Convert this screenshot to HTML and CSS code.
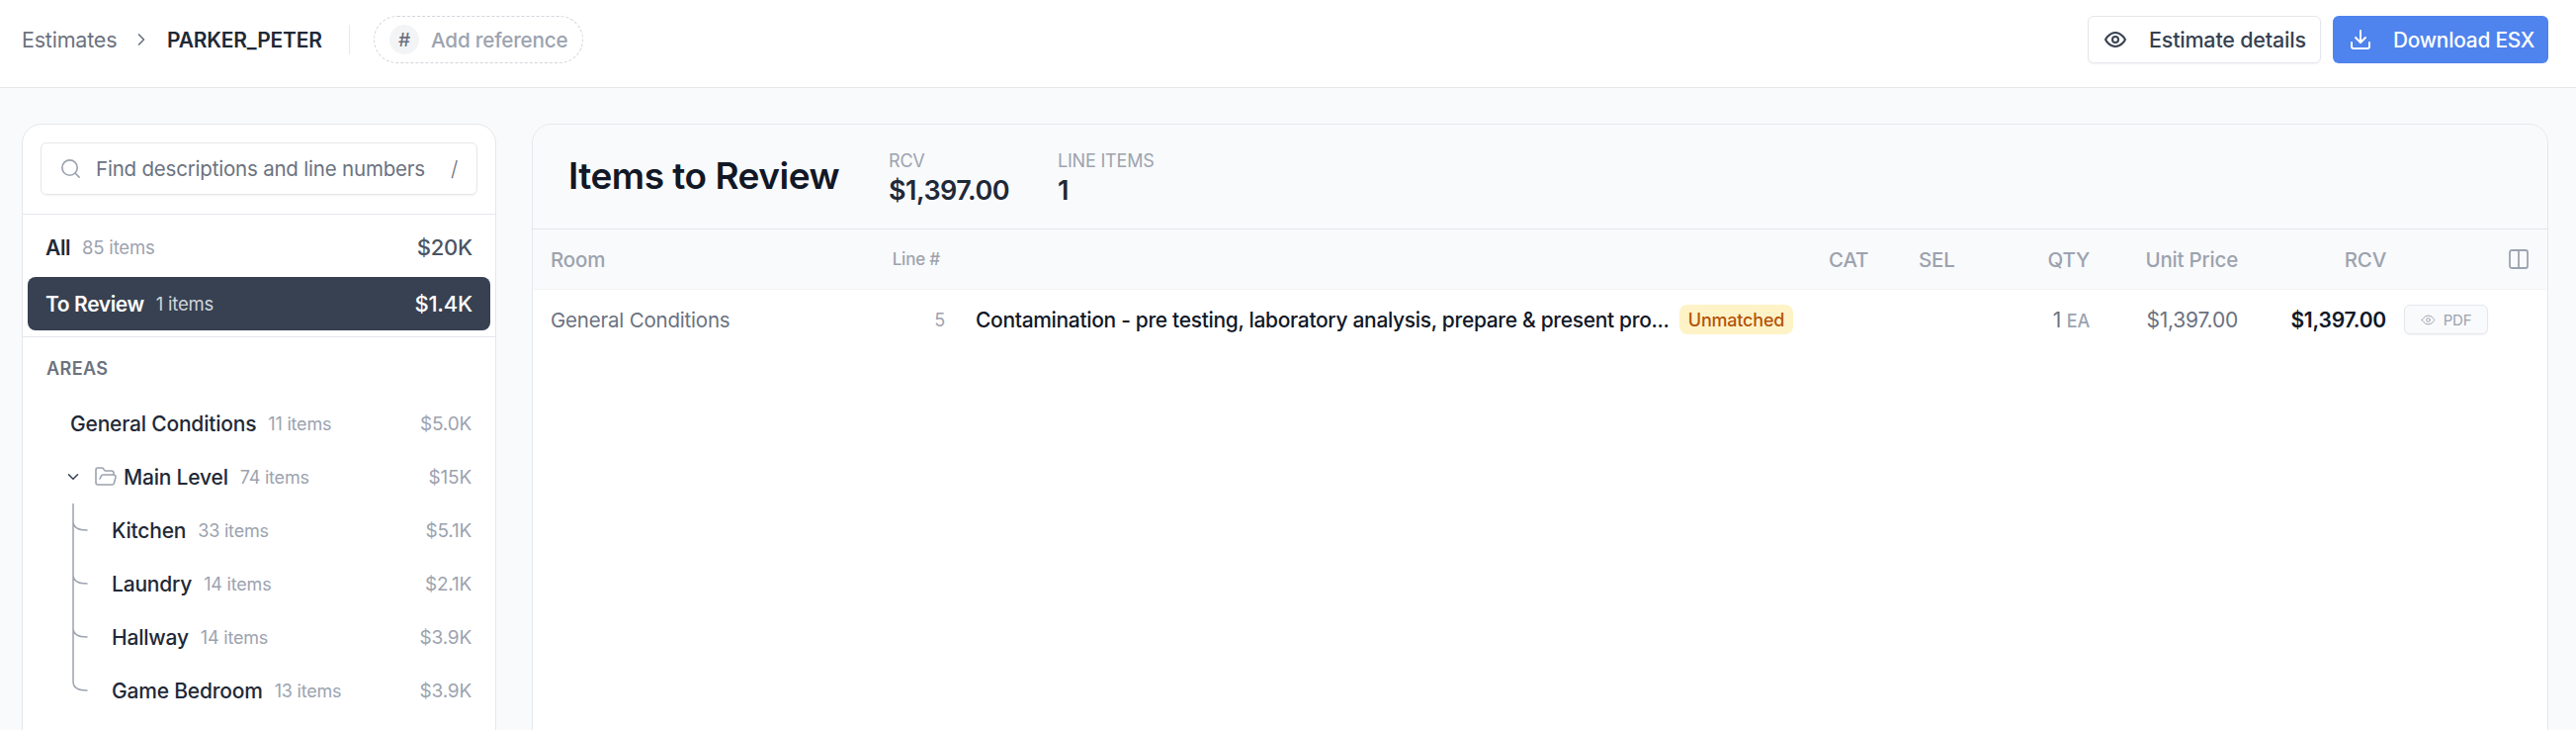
FILE: index.html
```html
<!DOCTYPE html>
<html lang="en">
<head>
<meta charset="utf-8">
<title>PARKER_PETER</title>
<link rel="stylesheet" href="styles.css">
</head>
<body>
<header class="topbar">
  <nav class="crumbs">
    <span class="crumb">Estimates</span>
    <svg class="crumb-chev" viewBox="0 0 24 24"><path d="m9 18 6-6-6-6"/></svg>
    <span class="crumb-current">PARKER_PETER</span>
    <span class="crumb-div"></span>
    <button class="ref-pill"><span class="ref-hash">#</span><span>Add reference</span></button>
  </nav>
  <div class="actions">
    <button class="btn btn-light">
      <svg class="btn-icon" viewBox="0 0 24 24"><path d="M2 12s3.600-7 10-7 10 7 10 7-3.600 7-10 7-10-7-10-7Z"/><circle cx="12" cy="12" r="3"/></svg>
      <span>Estimate details</span>
    </button>
    <button class="btn btn-blue">
      <svg class="btn-icon" viewBox="0 0 24 24"><path d="M21 15v4a2 2 0 0 1-2 2H5a2 2 0 0 1-2-2v-4"/><path d="m7 10 5 5 5-5"/><path d="M12 15V3"/></svg>
      <span>Download ESX</span>
    </button>
  </div>
</header>
<main class="workspace">
  <aside class="sidebar">
    <div class="search-wrap">
      <div class="search">
        <svg class="search-icon" viewBox="0 0 24 24"><circle cx="11" cy="11" r="8"/><path d="m21 21-4.300-4.300"/></svg>
        <span class="search-text">Find descriptions and line numbers</span>
        <span class="search-key">/</span>
      </div>
    </div>
    <div class="filters">
      <div class="nav-row nav-top"><span class="nav-name strong">All</span><span class="nav-count">85 items</span><span class="nav-val">$20K</span></div>
      <div class="nav-row nav-top active"><span class="nav-name strong">To Review</span><span class="nav-count">1 items</span><span class="nav-val">$1.4K</span></div>
    </div>
    <div class="areas">
      <div class="areas-title">AREAS</div>
      <div class="nav-row area"><span class="nav-name">General Conditions</span><span class="nav-count">11 items</span><span class="nav-val light">$5.0K</span></div>
      <div class="nav-row level">
        <svg class="level-chev" viewBox="0 0 24 24"><path d="m6 9 6 6 6-6"/></svg>
        <svg class="folder" viewBox="0 0 24 24"><path d="m6 14 1.500-2.900A2 2 0 0 1 9.240 10H20a2 2 0 0 1 1.940 2.500l-1.540 6a2 2 0 0 1-1.950 1.500H4a2 2 0 0 1-2-2V5a2 2 0 0 1 2-2h3.900a2 2 0 0 1 1.690.9l.81 1.200a2 2 0 0 0 1.670.9H18a2 2 0 0 1 2 2v2"/></svg>
        <span class="nav-name">Main Level</span><span class="nav-count">74 items</span><span class="nav-val light">$15K</span>
      </div>
      <div class="tree">
        <svg class="tree-lines" viewBox="0 0 18 196"><path d="M1 0V180Q1 189 15 189M1 18Q1 27 15 27M1 72Q1 81 15 81M1 126Q1 135 15 135"/></svg>
        <div class="nav-row room"><span class="nav-name">Kitchen</span><span class="nav-count">33 items</span><span class="nav-val light">$5.1K</span></div>
        <div class="nav-row room"><span class="nav-name">Laundry</span><span class="nav-count">14 items</span><span class="nav-val light">$2.1K</span></div>
        <div class="nav-row room"><span class="nav-name">Hallway</span><span class="nav-count">14 items</span><span class="nav-val light">$3.9K</span></div>
        <div class="nav-row room"><span class="nav-name">Game Bedroom</span><span class="nav-count">13 items</span><span class="nav-val light">$3.9K</span></div>
      </div>
    </div>
  </aside>
  <section class="panel">
    <div class="panel-head">
      <h1 class="panel-title">Items to Review</h1>
      <div class="stat stat-rcv"><div class="stat-label">RCV</div><div class="stat-value">$1,397.00</div></div>
      <div class="stat"><div class="stat-label">LINE ITEMS</div><div class="stat-value">1</div></div>
    </div>
    <div class="grid-row grid-head">
      <span>Room</span>
      <span class="c-line">Line #</span>
      <span></span>
      <span>CAT</span>
      <span>SEL</span>
      <span class="c-r">QTY</span>
      <span class="c-r">Unit Price</span>
      <span class="c-r">RCV</span>
      <span class="c-end"><svg class="col-icon" viewBox="0 0 20 20"><rect x="1" y="1" width="18" height="18" rx="2"/><path d="M10 1v18"/></svg></span>
    </div>
    <div class="grid-row grid-item">
      <span class="c-room">General Conditions</span>
      <span class="c-linenum">5</span>
      <span class="c-desc"><span class="desc-text">Contamination - pre testing, laboratory analysis, prepare &amp; present pro...</span><span class="badge">Unmatched</span></span>
      <span></span>
      <span></span>
      <span class="c-r c-qty">1 <small>EA</small></span>
      <span class="c-r c-unit">$1,397.00</span>
      <span class="c-r c-rcv">$1,397.00</span>
      <span class="c-pdf"><button class="pdf-btn"><svg class="pdf-icon" viewBox="0 0 24 24"><path d="M2 12s3.600-7 10-7 10 7 10 7-3.600 7-10 7-10-7-10-7Z"/><circle cx="12" cy="12" r="3"/></svg>PDF</button></span>
    </div>
  </section>
</main>
</body>
</html>
```
FILE: styles.css
```css
* { box-sizing: border-box; }
html, body { margin: 0; height: 738px; overflow: hidden; }
body { font-family: Inter, "Liberation Sans", sans-serif; background: #f9fafb; color: #1f2937; font-size: 21px; letter-spacing: -0.2px; }
svg { fill: none; stroke: currentColor; stroke-width: 2; stroke-linecap: round; stroke-linejoin: round; flex: none; }
button { font: inherit; letter-spacing: inherit; }

.topbar { height: 89px; background: #fff; border-bottom: 1px solid #e5e7eb; display: flex; align-items: center; justify-content: space-between; padding: 0 28px 8px 22px; }
.crumbs { display: flex; align-items: center; }
.crumb { color: #6b7280; width: 111px; font-size: 21.500px; }
.crumb-chev { width: 20px; height: 20px; color: #6b7280; margin-right: 2px; }
.crumb-current { color: #1f2937; font-weight: 600; margin-left: 14px; width: 184px; white-space: nowrap; }
.crumb-div { width: 1px; height: 30px; background: #e5e7eb; }
.ref-pill { margin-left: 24px; width: 212px; height: 48px; border: 1px dashed #d1d5db; border-radius: 24px; background: #fff; color: #9ca3af; display: flex; align-items: center; padding: 0 0 0 15px; gap: 12px; font-weight: 500; font-size: 20.700px; }
.ref-hash { width: 30px; height: 30px; border-radius: 50%; background: #f3f4f6; color: #6b7280; display: flex; align-items: center; justify-content: center; font-size: 19px; }

.actions { display: flex; gap: 12px; }
.btn { height: 48px; border-radius: 6px; display: flex; align-items: center; font-weight: 500; border: 1px solid transparent; }
.btn-light { width: 236px; background: #fff; border-color: #e5e7eb; color: #374151; padding-left: 15px; gap: 22px; box-shadow: 0 1px 2px rgba(0,0,0,.05); font-size: 21.500px; }
.btn-blue { width: 218px; background: #4f83ee; color: #fff; padding-left: 15px; gap: 21px; font-size: 20.800px; }
.btn-icon { width: 24px; height: 24px; }

.workspace { display: grid; grid-template-columns: 480px 2040px; gap: 36px; padding: 36px 0 0 22px; align-items: start; }
.sidebar, .panel { height: 640px; background: #fff; border: 1px solid #e5e7eb; border-radius: 20px; }
.search-wrap { padding: 18px 18px; border-bottom: 1px solid #e5e7eb; height: 91px; }
.search { height: 53px; border: 1px solid #e5e7eb; border-radius: 6px; box-shadow: 0 1px 2px rgba(0,0,0,.05); display: flex; align-items: center; padding: 0 19px 0 18px; }
.search-icon { width: 23px; height: 23px; color: #9ca3af; stroke-width: 1.700; }
.search-text { color: #6b7280; margin-left: 14px; flex: 1; white-space: nowrap; font-size: 20.500px; }
.search-key { color: #6b7280; font-weight: 300; }

.filters { height: 124px; padding: 6px 5px; border-bottom: 1px solid #e5e7eb; display: flex; flex-direction: column; gap: 3px; }
.nav-row { display: flex; align-items: center; height: 54px; white-space: nowrap; }
.nav-name { font-weight: 500; color: #1f2937; }
.nav-name.strong { font-weight: 600; letter-spacing: -0.4px; }
.nav-count { color: #9ca3af; font-size: 18px; margin-left: 12px; }
.nav-val { margin-left: auto; color: #4b5563; font-weight: 500; }
.nav-val.light { color: #9ca3af; font-size: 19px; font-weight: 400; }
.nav-top { padding: 0 18px; }
.nav-top .nav-val { font-size: 22px; }
.nav-top .nav-count { font-size: 18.500px; }
.nav-top.active { background: #374151; border-radius: 8px; }
.active .nav-name, .active .nav-val { color: #fff; }
.nav-top.active .nav-count { color: #d1d5db; }

.areas { padding: 0 24px; }
.areas-title { height: 60px; padding-top: 20px; line-height: 24px; color: #6b7280; font-size: 18px; font-weight: 600; letter-spacing: .4px; }
.area { padding-left: 24px; }
.level { padding-left: 18px; }
.level-chev { width: 18px; height: 18px; color: #374151; }
.folder { width: 24px; height: 24px; color: #9ca3af; margin-left: 12px; margin-right: 6px; stroke-width: 1.600; }
.tree { position: relative; }
.tree-lines { position: absolute; left: 26px; top: 0; width: 18px; height: 196px; color: #9ca3af; stroke-width: 1.500; }
.room { padding-left: 66px; }

.panel { overflow: hidden; }
.panel-head { height: 106px; background: #f9fafb; border-bottom: 1px solid #e5e7eb; display: flex; align-items: center; padding-left: 36px; }
.panel-title { margin: 0; width: 324px; font-size: 37px; font-weight: 600; color: #111827; letter-spacing: -0.500px; padding-bottom: 2px; white-space: nowrap; }
.stat { padding-top: 6px; }
.stat-rcv { width: 171px; }
.stat-label { color: #9ca3af; font-size: 18px; line-height: 22px; }
.stat-value { color: #1f2937; font-size: 27px; font-weight: 600; line-height: 38px; letter-spacing: -0.500px; }

.grid-row { display: grid; grid-template-columns: 323px 76px 894px 91px 99px 74px 150px 150px 1fr; align-items: center; padding-left: 18px; }
.grid-head { height: 61px; background: #f9fafb; border-bottom: 1px solid #f3f4f6; color: #9ca3af; font-weight: 500; font-size: 20.500px; }
.grid-item { height: 60px; }
.c-line { font-size: 17px; text-align: right; padding-right: 5px; }
.c-r { text-align: right; }
.c-end { display: flex; justify-content: flex-end; padding-right: 19px; }
.col-icon { width: 20px; height: 20px; color: #9ca3af; stroke-width: 1.800; }
.c-room { color: #6b7280; font-size: 20.500px; }
.c-linenum { text-align: right; color: #9ca3af; font-size: 18px; }
.c-desc { display: flex; align-items: center; padding-left: 31px; white-space: nowrap; }
.desc-text { color: #111827; font-weight: 500; width: 712px; letter-spacing: -0.330px; }
.badge { height: 30px; width: 115px; border-radius: 8px; background: #fef3c7; color: #b45309; font-size: 18px; font-weight: 500; display: flex; align-items: center; justify-content: center; }
.c-qty { color: #6b7280; }
.c-qty small { color: #9ca3af; font-size: 18px; font-weight: 500; }
.c-unit { color: #6b7280; }
.c-rcv { color: #111827; font-weight: 600; }
.c-pdf { padding-left: 18px; }
.pdf-btn { width: 85px; height: 30px; border: 1px solid #e5e7eb; border-radius: 6px; background: #f9fafb; color: #9ca3af; font-size: 15px; display: flex; align-items: center; justify-content: center; gap: 8px; box-shadow: 0 1px 2px rgba(0,0,0,.05); padding: 0; }
.pdf-icon { width: 15px; height: 15px; stroke-width: 1.600; }
```
